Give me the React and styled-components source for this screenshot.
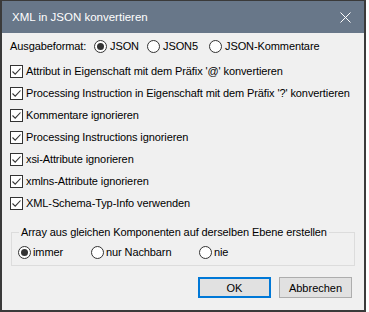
import React, { useState } from 'react'
import styled, { createGlobalStyle } from 'styled-components'

const Global = createGlobalStyle`
  html, body { margin: 0; padding: 0; background: #ffffff; }
  body {
    font-family: "Liberation Sans", Arial, sans-serif;
    font-size: 11px;
    letter-spacing: -0.1px;
    color: #000;
  }
`

const Window = styled.div`
  width: 366px;
  height: 312px;
  box-sizing: border-box;
  border: 2px solid #3a3a3a;
  border-top-width: 1px;
  background: #f0f0f0;
  display: flex;
  flex-direction: column;
`

const TitleBar = styled.div`
  height: 32px;
  background: #687789;
  color: #fff;
  display: flex;
  align-items: center;
  justify-content: space-between;
  padding: 0 13px 0 10px;
  font-size: 11.5px;
  letter-spacing: 0;
  flex-shrink: 0;
`

const Body = styled.div`
  padding: 2px 0 0 8px;
  display: flex;
  flex-direction: column;
`

const Row = styled.div`
  height: 22px;
  display: flex;
  align-items: center;
  margin-bottom: ${p => p.gap || 0}px;
`

const Label = styled.span`
  width: ${p => p.w}px;
  white-space: nowrap;
`

const Choice = styled.label`
  display: flex;
  align-items: center;
  gap: ${p => p.gap || 3}px;
  width: ${p => p.w ? p.w + 'px' : 'auto'};
  white-space: nowrap;
`

const RadioCircle = styled.span`
  width: 13px;
  height: 13px;
  box-sizing: border-box;
  border-radius: 50%;
  border: 1px solid #333;
  background: #fff;
  display: flex;
  align-items: center;
  justify-content: center;
  flex-shrink: 0;
  &::after {
    content: '';
    width: 7px;
    height: 7px;
    border-radius: 50%;
    background: #333;
    display: ${p => p.on ? 'block' : 'none'};
  }
`

const Box = styled.span`
  width: 13px;
  height: 13px;
  box-sizing: border-box;
  border: 1px solid #333;
  background: #fff;
  display: flex;
  align-items: center;
  justify-content: center;
  flex-shrink: 0;
`

const Group = styled.fieldset`
  margin: 11px 9px 0 1px;
  padding: 0 0 5px 6px;
  border: 1px solid #dcdcdc;
  height: 41px;
  box-sizing: border-box;
  legend {
    padding: 0 2px;
    margin-left: 1px;
    line-height: 14px;
    white-space: nowrap;
  }
`

const GroupRow = styled.div`
  display: flex;
  align-items: center;
  height: 22px;
  margin-top: 2px;
`

const Buttons = styled.div`
  display: flex;
  justify-content: flex-end;
  gap: 8px;
  padding: 11px 12px 0 0;
`

const Button = styled.button`
  width: 73px;
  height: 21px;
  box-sizing: border-box;
  background: #e1e1e1;
  border: ${p => p.primary ? '2px solid #0078d7' : '1px solid #adadad'};
  font-family: inherit;
  font-size: 11px;
  color: #000;
  padding: 0;
`

function Check({ children }) {
  return (
    <Row>
      <Choice gap={3}>
        <Box>
          <svg width="11" height="11" viewBox="0 0 11 11">
            <path d="M1.5 5.5 L4.2 8.2 L9.5 2.5" fill="none" stroke="#333" strokeWidth="1.1" />
          </svg>
        </Box>
        {children}
      </Choice>
    </Row>
  )
}

const checks = [
  "Attribut in Eigenschaft mit dem Präfix '@' konvertieren",
  "Processing Instruction in Eigenschaft mit dem Präfix '?' konvertieren",
  'Kommentare ignorieren',
  'Processing Instructions ignorieren',
  'xsi-Attribute ignorieren',
  'xmlns-Attribute ignorieren',
  'XML-Schema-Typ-Info verwenden',
]

function App() {
  const [format] = useState('JSON')
  const [arr] = useState('immer')

  return (
    <>
      <Global />
      <Window>
        <TitleBar>
          <span>XML in JSON konvertieren</span>
          <svg width="11" height="11" viewBox="0 0 11 11">
            <path d="M0.5 0.5 L10.5 10.5 M10.5 0.5 L0.5 10.5" stroke="#fff" strokeWidth="1" />
          </svg>
        </TitleBar>
        <Body>
          <Row gap={3}>
            <Label w={84}>Ausgabeformat:</Label>
            <Choice w={53}><RadioCircle on={format === 'JSON'} />JSON</Choice>
            <Choice w={62}><RadioCircle on={format === 'JSON5'} />JSON5</Choice>
            <Choice><RadioCircle on={format === 'JSON-Kommentare'} />JSON-Kommentare</Choice>
          </Row>
          {checks.map(c => <Check key={c}>{c}</Check>)}
          <Group>
            <legend>Array aus gleichen Komponenten auf derselben Ebene erstellen</legend>
            <GroupRow>
              <Choice w={73} gap={2}><RadioCircle on={arr === 'immer'} />immer</Choice>
              <Choice w={108} gap={2}><RadioCircle on={arr === 'nur'} />nur Nachbarn</Choice>
              <Choice gap={2}><RadioCircle on={arr === 'nie'} />nie</Choice>
            </GroupRow>
          </Group>
          <Buttons>
            <Button primary>OK</Button>
            <Button>Abbrechen</Button>
          </Buttons>
        </Body>
      </Window>
    </>
  )
}

export default App
